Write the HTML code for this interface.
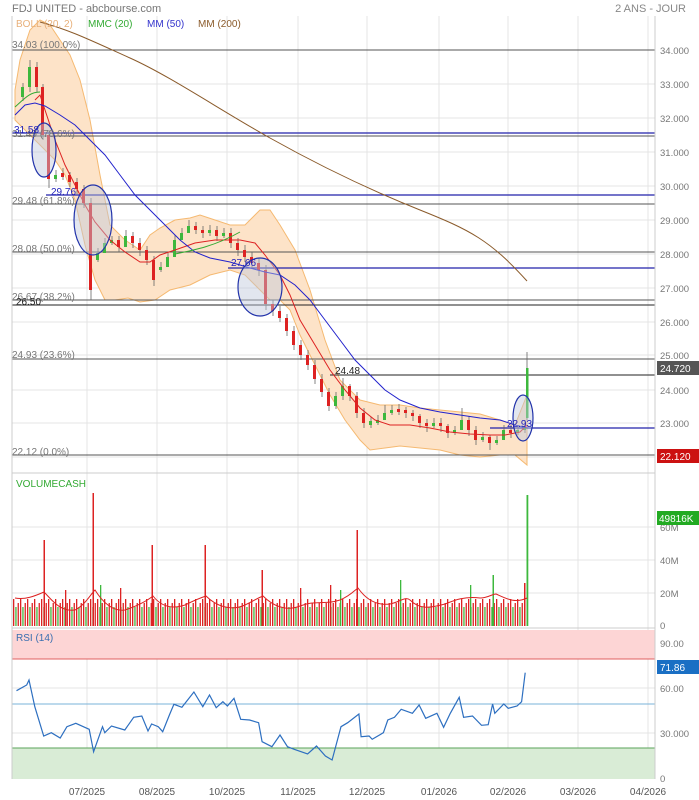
<!DOCTYPE html>
<html><head><meta charset="utf-8"><style>
html,body{margin:0;padding:0;background:#fff;width:699px;height:800px;overflow:hidden}
svg{display:block;font-family:"Liberation Sans",sans-serif}
</style></head><body>
<svg width="699" height="800" xmlns="http://www.w3.org/2000/svg">
<defs>
<pattern id="vp" x="13" y="595" width="7" height="31" patternUnits="userSpaceOnUse">
<rect x="0" y="4" width="1.3" height="27" fill="#dd2222"/>
<rect x="2.3" y="12" width="1.3" height="19" fill="#3db83d"/>
<rect x="4.6" y="8" width="1.3" height="23" fill="#dd2222"/>
</pattern>
</defs>
<rect width="699" height="800" fill="#fff"/>
<text x="12" y="12" font-size="11" fill="#777">FDJ UNITED - abcbourse.com</text>
<text x="686" y="12" font-size="11" fill="#888" text-anchor="end">2 ANS - JOUR</text>
<g stroke="#e4e4e4" stroke-width="1">
<path d="M87,16V779M157,16V779M227,16V779M298,16V779M367,16V779M439,16V779M508,16V779M578,16V779M648,16V779"/>
<path d="M12,50H655M12,84H655M12,118H655M12,152H655M12,186H655M12,220H655M12,254H655M12,288H655M12,322H655M12,355H655M12,390H655M12,423H655M12,457H655M12,527H655M12,560H655M12,593H655M12,643H655M12,688H655M12,733H655"/>
</g>
<rect x="12" y="630" width="643" height="29" fill="#fdd5d5"/>
<rect x="12" y="748" width="643" height="31" fill="#d9ecd6"/>
<line x1="12" y1="659" x2="655" y2="659" stroke="#e06060"/>
<line x1="12" y1="748" x2="655" y2="748" stroke="#5aa35a"/>
<line x1="12" y1="704" x2="655" y2="704" stroke="#7ab3d8"/>

<!-- Bollinger -->
<path d="M15,90L20,60L30,30L40,20L50,25L60,40L70,55L80,80L90,120L100,175L110,225L125,240L140,250L150,235L160,228L175,220L190,218L200,215L215,220L230,225L245,225L260,210L270,210L280,225L295,250L310,290L325,340L340,380L360,400L380,405L400,405L420,408L440,410L460,412L480,414L500,420L515,425L527,395L527,465L515,455L500,455L480,457L460,455L440,450L420,448L400,446L385,448L370,450L360,440L345,420L330,395L315,365L300,335L290,310L280,300L270,300L260,290L245,275L230,270L210,275L190,285L170,290L155,300L140,302L128,298L115,300L105,300L95,280L85,245L75,200L65,175L55,160L45,150L35,140L25,130L15,120Z" fill="#fde3c8" stroke="#f5b971" stroke-width="1"/>

<!-- fib lines -->
<g stroke="#555" stroke-width="1">
<path d="M12,50H655M12,136H655M12,204H655M12,252H655M12,300H655M12,359H655M12,455H655"/>
<path d="M12,305H655M330,375H655" stroke="#222"/>
</g>
<g stroke="#2222aa" stroke-width="1.2">
<path d="M12,133H655M46,195H655M228,268H655M490,428H655"/>
</g>

<!-- MM200 -->
<path d="M40,22 C70,30 90,40 130,58 S220,110 270,138 S370,190 420,210 S490,240 527,281" fill="none" stroke="#8a5a2a" stroke-width="1"/>

<!-- wicks -->
<path d="M23,83V101M30,60V92M37,62V92M43,84V140M49,130V188M56,170V182M63,168V180M70,172V187M77,178V194M84,185V208M91,198V300M98,248V262M105,238V248M112,236V245M119,236V252M126,230V242M133,232V248M140,238V256M147,246V265M154,256V286M161,262V272M168,252V262M175,235V246M182,228V238M189,220V231M196,222V234M203,226V238M210,225V236M217,226V241M224,228V238M231,228V248M238,238V256M245,245V262M252,252V268M259,258V276M266,265V310M273,300V316M280,306V322M287,314V336M294,326V350M301,340V360M308,350V370M315,360V384M322,374V397M329,388V411M336,392V409M343,378V400M350,384V401M357,392V418M364,408V428M371,417V428M378,415V425M385,405V418M392,405V415M399,404V415M406,407V418M413,410V421M420,414V428M427,419V432M434,418V428M441,418V432M448,424V438M455,426V435M462,408V425M469,416V436M476,426V445M483,432V442M490,435V450M497,436V445M504,425V440M511,425V438M518,425V435M525,420V433M527,352V420" stroke="#666" stroke-width="0.8" fill="none"/>
<!-- green bodies -->
<path d="M21,87h3v10h-3zM28,67h3v20h-3zM54,175h3v4h-3zM96,253h3v7h-3zM103,243h3v10h-3zM110,240h3v3h-3zM124,236h3v11h-3zM159,267h3v3h-3zM166,257h3v10h-3zM173,240h3v17h-3zM180,233h3v7h-3zM187,226h3v7h-3zM208,230h3v3h-3zM222,233h3v3h-3zM334,396h3v10h-3zM341,386h3v10h-3zM369,421h3v4h-3zM376,420h3v3h-3zM383,413h3v7h-3zM390,410h3v3h-3zM432,423h3v3h-3zM453,430h3v3h-3zM460,420h3v10h-3zM481,437h3v3h-3zM495,440h3v3h-3zM502,430h3v10h-3zM516,430h3v3h-3zM523,426h3v4h-3zM526,368h2.5v50h-2.5z" fill="#3db83d"/>
<!-- red bodies -->
<path d="M35,67h3v20h-3zM41,87h3v48h-3zM47,135h3v44h-3zM61,173h3v4h-3zM68,175h3v7h-3zM75,182h3v7h-3zM82,189h3v14h-3zM89,203h3v87h-3zM117,240h3v7h-3zM131,236h3v7h-3zM138,243h3v7h-3zM145,250h3v10h-3zM152,260h3v20h-3zM194,226h3v4h-3zM201,230h3v3h-3zM215,230h3v6h-3zM229,233h3v10h-3zM236,243h3v7h-3zM243,250h3v7h-3zM250,257h3v6h-3zM257,263h3v7h-3zM264,270h3v34h-3zM271,304h3v7h-3zM278,311h3v7h-3zM285,318h3v13h-3zM292,331h3v14h-3zM299,345h3v10h-3zM306,355h3v10h-3zM313,365h3v14h-3zM320,379h3v13h-3zM327,392h3v14h-3zM348,386h3v10h-3zM355,396h3v17h-3zM362,413h3v10h-3zM397,409h3v3h-3zM404,410h3v3h-3zM411,413h3v3h-3zM418,416h3v7h-3zM425,423h3v3h-3zM439,423h3v3h-3zM446,426h3v7h-3zM467,420h3v10h-3zM474,430h3v10h-3zM488,437h3v6h-3zM509,430h3v3h-3z" fill="#dd2222"/>

<!-- MAs -->
<path d="M35,100L40,95L45,110L55,140L65,165L75,185L85,205L95,222L110,240L125,252L140,262L150,262L160,255L175,250L195,243L215,240L240,240L255,243L265,255L280,275L290,295L300,320L315,345L330,370L345,390L360,408L375,420L390,425L410,425L430,428L450,432L470,434L490,435L505,435L520,432L527,425" fill="none" stroke="#dd2222" stroke-width="1"/>
<path d="M15,115L25,105L35,103L45,106L60,115L75,125L90,140L105,155L120,175L135,195L150,210L165,225L180,240L195,252L210,258L230,262L250,268L265,272L280,275L295,285L310,300L325,320L340,340L355,360L370,375L385,390L400,400L420,408L440,412L460,415L480,418L500,420L515,425L527,428" fill="none" stroke="#2222cc" stroke-width="1"/>
<path d="M15,107 C25,98 30,92 40,92" fill="none" stroke="#3a3" stroke-width="1"/>
<path d="M175,254 C195,250 215,246 240,232" fill="none" stroke="#3a3" stroke-width="1"/>

<!-- ellipses -->
<g fill="rgba(190,200,220,0.45)" stroke="#2233aa" stroke-width="1.2">
<ellipse cx="44" cy="150" rx="12" ry="27"/>
<ellipse cx="93" cy="220" rx="19" ry="35"/>
<ellipse cx="260" cy="287" rx="22" ry="29"/>
<ellipse cx="523" cy="418" rx="10" ry="23"/>
</g>

<!-- volume -->
<rect x="13" y="595" width="512" height="31" fill="url(#vp)"/>
<g fill="#dd2222">
<rect x="43.5" y="540" width="1.5" height="86"/><rect x="92.5" y="493" width="1.5" height="133"/><rect x="151.5" y="545" width="1.5" height="81"/><rect x="204.5" y="545" width="1.5" height="81"/><rect x="261.5" y="570" width="1.5" height="56"/><rect x="356.5" y="530" width="1.5" height="96"/><rect x="524" y="583" width="1.5" height="43"/>
<rect x="65" y="590" width="1.3" height="36"/><rect x="120" y="588" width="1.3" height="38"/><rect x="300" y="588" width="1.3" height="38"/><rect x="330" y="585" width="1.3" height="41"/>
</g>
<g fill="#3db83d">
<rect x="492.5" y="575" width="1.5" height="51"/><rect x="526.5" y="495" width="1.8" height="131"/>
<rect x="400" y="580" width="1.3" height="46"/><rect x="100" y="585" width="1.3" height="41"/><rect x="340" y="590" width="1.3" height="36"/><rect x="470" y="585" width="1.3" height="41"/>
</g>
<path d="M15,598 C25,600 35,596 44,592 C52,600 60,612 75,610 C85,605 90,595 95,590 C100,598 110,612 125,610 C140,605 148,600 153,596 C160,605 170,610 185,605 C195,600 200,598 206,596 C215,605 230,612 245,605 C255,600 258,598 263,596 C272,605 285,612 300,606 C315,600 325,605 340,600 C350,596 355,590 358,588 C365,598 375,606 390,604 C400,602 405,596 410,600 C420,610 430,608 445,604 C455,600 465,596 480,598 C488,598 492,594 496,594 C505,598 515,604 527,598" fill="none" stroke="#dd2222" stroke-width="1"/>

<!-- RSI -->
<path d="M16.5,690.7L26.7,685L29,680L34.8,706.7L43.7,736L51.3,732.7L60.2,738L66.9,726.7L75.8,723.3L89.2,729.3L93.6,751.7L102.5,726.7L104.8,732.7L111.5,726L124.8,730L133.7,717.3L141.8,716L148,731L151.6,724L158.3,726.7L162.7,731.7L169.4,715L173.9,704.3L181.9,707.3L193.9,692L202.8,706.7L209.5,695L216.2,707.7L222.9,701.7L227.4,706L234,698.3L240.7,719.3L249.6,720L258.6,722.7L262.1,741.7L271.9,746.7L280,735L287.5,746.7L294.2,749.3L307.6,754L316.5,746L325.4,756L332.1,760L341,726.7L347.7,722.7L358.9,714L361.1,736.7L369.1,736L372.2,739.3L383.4,732.7L387.8,720L394.5,717.3L401.2,709.3L412.4,713.3L419.1,705L425.7,718.3L436.9,713.3L443.6,727.3L450.3,713.3L459.2,697.3L463.6,717.3L472.5,716L481.5,725.3L488.2,724.7L492.6,704L494.8,713.3L503.8,704L508.2,708.3L517.1,706L521.6,701.7L525.2,672.7" fill="none" stroke="#2d6fc0" stroke-width="1.2"/>

<g stroke="#ccc"><line x1="12" y1="16" x2="12" y2="779"/><line x1="655" y1="16" x2="655" y2="779"/><line x1="12" y1="473" x2="655" y2="473"/><line x1="12" y1="628" x2="655" y2="628"/></g>
<g font-size="9.5" fill="#777">
<text x="660" y="54">34.000</text><text x="660" y="88">33.000</text><text x="660" y="122">32.000</text><text x="660" y="156">31.000</text><text x="660" y="190">30.000</text><text x="660" y="224">29.000</text><text x="660" y="258">28.000</text><text x="660" y="292">27.000</text><text x="660" y="326">26.000</text><text x="660" y="359">25.000</text><text x="660" y="394">24.000</text><text x="660" y="427">23.000</text>
<text x="660" y="531">60M</text><text x="660" y="564">40M</text><text x="660" y="597">20M</text><text x="660" y="629">0</text>
<text x="660" y="647">90.00</text><text x="660" y="692">60.00</text><text x="660" y="737">30.000</text><text x="660" y="782">0</text>
</g>
<rect x="657" y="361" width="42" height="14" fill="#555"/><text x="660" y="372" font-size="10" fill="#fff">24.720</text>
<rect x="657" y="449" width="42" height="14" fill="#cc1111"/><text x="660" y="460" font-size="10" fill="#fff">22.120</text>
<rect x="657" y="511" width="42" height="14" fill="#22aa22"/><text x="659" y="522" font-size="10" fill="#fff">49816K</text>
<rect x="657" y="660" width="42" height="14" fill="#1a6fc4"/><text x="660" y="671" font-size="10" fill="#fff">71.86</text>
<g font-size="10" fill="#555" text-anchor="middle">
<text x="87" y="795">07/2025</text><text x="157" y="795">08/2025</text><text x="227" y="795">10/2025</text><text x="298" y="795">11/2025</text><text x="367" y="795">12/2025</text><text x="439" y="795">01/2026</text><text x="508" y="795">02/2026</text><text x="578" y="795">03/2026</text><text x="648" y="795">04/2026</text>
</g>
<g font-size="10">
<text x="16" y="27" fill="#e8b07a">BOLL (20, 2)</text><text x="88" y="27" fill="#3a3">MMC (20)</text><text x="147" y="27" fill="#33c">MM (50)</text><text x="198" y="27" fill="#8a5a2a">MM (200)</text>
<text x="16" y="487" fill="#3a3">VOLUMECASH</text>
<text x="16" y="641" fill="#3a6fb0">RSI (14)</text>
</g>
<g font-size="10" fill="#777">
<text x="12" y="48">34.03  (100.0%)</text><text x="12" y="137">31.49  (78.6%)</text><text x="12" y="204">29.48  (61.8%)</text><text x="12" y="252">28.08  (50.0%)</text><text x="12" y="300">26.67  (38.2%)</text><text x="12" y="358">24.93  (23.6%)</text><text x="12" y="455">22.12  (0.0%)</text>
</g>
<g font-size="10">
<text x="14" y="133" fill="#22b">31.58</text><text x="51" y="195" fill="#22b">29.76</text><text x="231" y="266" fill="#22b">27.66</text><text x="507" y="427" fill="#22b">22.93</text>
<text x="16" y="305" fill="#222">26.50</text><text x="335" y="374" fill="#222">24.48</text>
</g>
</svg>
</body></html>
